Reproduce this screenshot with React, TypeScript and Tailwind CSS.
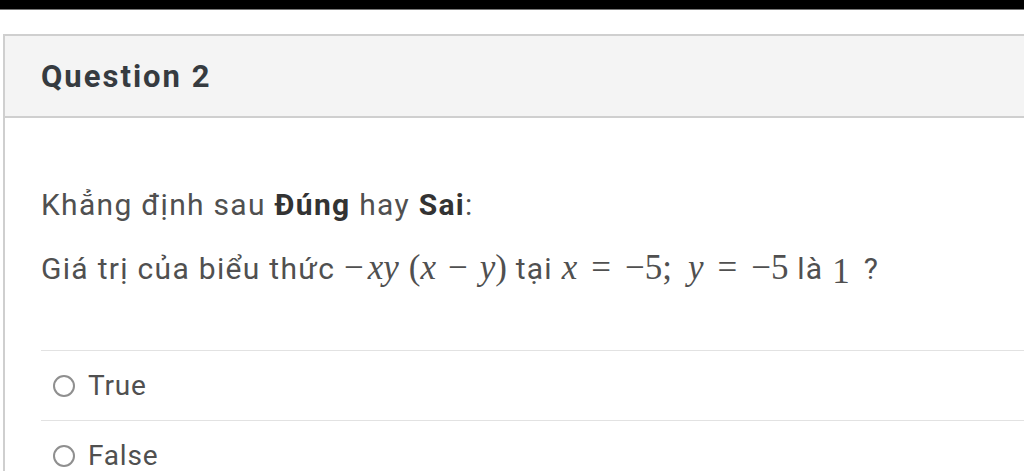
export default function App() {
  const math = "font-['Liberation_Serif',serif] text-[35px] tracking-normal";
  return (
    <div className="h-[471px] w-[1024px] overflow-hidden bg-white font-['Roboto',sans-serif]">
      <div className="h-[10px] bg-black border-b border-[#777]" />
      <div className="ml-[3px] mt-[24px] border-l-2 border-t-2 border-[#cfcfcf]">
        {/* header */}
        <div className="flex h-[82px] items-center border-b-2 border-[#cfcfcf] bg-[#f4f4f4] pl-[36px]">
          <h2 className="pt-[2px] text-[31px] font-bold tracking-[2px] text-[#363b40]">Question 2</h2>
        </div>

        {/* question text */}
        <div className="pl-[36px] pt-[69px] text-[30px] tracking-[1.3px] text-[#505050]">
          <p className="leading-[36px]">
            Khẳng định sau <b className="text-[#333]">Đúng</b> hay <b className="text-[#333]">Sai</b>:
          </p>
          <p className="mt-[27px] leading-[36px] whitespace-nowrap">
            Giá trị của biểu thức{" "}
            <span className={math}>
              −<i className="ml-[4px]">xy</i>
              <span className="ml-[10px]">(</span>
              <i>x</i>
              <span className="mx-[12px]">−</span>
              <i>y</i>)
            </span>{" "}
            tại{" "}
            <span className={math}>
              <i>x</i>
              <span className="mx-[14px]">=</span>−5;
              <i className="ml-[16px]">y</i>
              <span className="mx-[14px]">=</span>−5
            </span>{" "}
            là <span className={math + " relative top-[4px] text-[28px]"}>1</span>
            <span className="ml-[14px]">?</span>
          </p>

          {/* options */}
          <div className="mt-[63px] text-[28px] tracking-[0.8px]">
            {["True", "False"].map((opt) => (
              <label key={opt} className="flex h-[70px] items-center gap-[13px] border-t border-[#e2e2e2] pl-[12px]">
                <span className="h-[22px] w-[22px] shrink-0 rounded-full border-2 border-[#8f8f8f] bg-white" />
                <span>{opt}</span>
              </label>
            ))}
          </div>
        </div>
      </div>
    </div>
  );
}
